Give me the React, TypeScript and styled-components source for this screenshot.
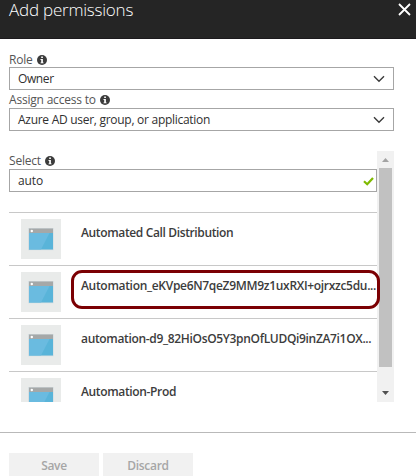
import React from 'react';
import styled, { createGlobalStyle } from 'styled-components';

const GlobalStyle = createGlobalStyle`
  * { box-sizing: border-box; }
  body { margin: 0; background: #fff; overflow: hidden; }
`;

const Blade = styled.div`
  width: 418px;
  height: 476px;
  overflow: hidden;
  display: flex;
  flex-direction: column;
  background: #fff;
  color: #303030;
  font-family: 'Open Sans', 'Noto Sans', sans-serif;
  font-size: 12px;
`;

const Header = styled.header`
  flex: none;
  width: 416px;
  height: 39px;
  padding: 0 5px 0 9px;
  display: flex;
  justify-content: space-between;
  background: #252525;
  border-bottom: 1px solid #1c1a1d;
  color: #fff;
`;

const Title = styled.h1`
  margin: 0;
  font-size: 17px;
  font-weight: 300;
  line-height: 20px;
  letter-spacing: -0.22px;
  white-space: nowrap;
`;

const CloseIcon = styled.svg`
  width: 13px;
  height: 13px;
  margin-top: 3px;
`;

const Body = styled.main`
  flex: none;
  height: 363px;
  padding: 12px 0 0 9px;
  display: flex;
  flex-direction: column;
`;

const Label = styled.div<{ $height: number; $top?: number }>`
  flex: none;
  height: ${(p) => p.$height}px;
  padding-top: ${(p) => p.$top ?? 0}px;
  display: flex;
  align-items: center;
  gap: 4px;
  color: #555;
  line-height: 16px;
  letter-spacing: -0.2px;
  white-space: nowrap;
`;

const Field = styled.div<{ $width: number; $tracking: number }>`
  flex: none;
  width: ${(p) => p.$width}px;
  height: 23px;
  padding: 0 8px;
  border: 1px solid #a6a6a6;
  display: flex;
  align-items: center;
  justify-content: space-between;
  line-height: 20px;
  letter-spacing: ${(p) => p.$tracking}px;
  white-space: nowrap;
`;

const Chevron = styled.svg`
  width: 12px;
  height: 8px;
  margin-top: 1px;
`;

const Check = styled.svg`
  width: 11px;
  height: 9px;
  margin: 1px -6px 0 0;
`;

const ScrollArea = styled.section`
  margin-top: 20px;
  height: 251px;
  display: flex;
`;

const Content = styled.div`
  flex: none;
  width: 368px;
  height: 251px;
`;

const List = styled.ul`
  list-style: none;
  margin: 19px 0 0;
  padding: 1px 4px 0 0;
  width: 372px;
  height: 191px;
  overflow: hidden;
`;

const Item = styled.li`
  position: relative;
  width: 368px;
  height: 53px;
  padding: 6px 0 0 12px;
  border-top: 1px solid #c8c8c8;
  display: flex;
`;

const Thumb = styled.svg`
  flex: none;
  width: 40px;
  height: 40px;
`;

const Name = styled.span<{ $tracking: number }>`
  margin: 5px 0 0 20px;
  font-weight: 600;
  line-height: 18px;
  color: #3c3c3c;
  letter-spacing: ${(p) => p.$tracking}px;
  white-space: nowrap;
`;

const Highlight = styled.div`
  position: absolute;
  left: 62px;
  top: 4px;
  width: 309px;
  height: 39px;
  border: 3px solid #7b0003;
  border-radius: 11px;
  z-index: 1;
`;

const Scrollbar = styled.div`
  width: 17px;
  height: 251px;
  background: #f1f1f1;
  display: flex;
  flex-direction: column;
  align-items: center;
`;

const ArrowBox = styled.svg`
  flex: none;
  width: 17px;
  height: 17px;
`;

const Handle = styled.div`
  width: 13px;
  height: 199px;
  background: #c1c1c1;
  margin-bottom: 18px;
`;

const Footer = styled.footer`
  flex: none;
  width: 416px;
  margin-top: 30px;
  height: 44px;
  padding: 20px 0 0 9px;
  border-top: 1px solid #b9b9b9;
  display: flex;
  gap: 4px;
`;

const Button = styled.button`
  width: 90px;
  height: 26px;
  padding: 0;
  border: 0;
  background: #f1f1f1;
  color: #a6a6a6;
  font: 600 12px/26px 'Open Sans', 'Noto Sans', sans-serif;
  letter-spacing: -0.3px;
`;

const Info = () => (
  <svg width="10" height="10" viewBox="0 0 10 10">
    <circle cx="5" cy="5" r="5" fill="#3c3c3c" />
    <path d="M4.2 1.5h1.7v1.4H4.2zM3.5 4h2.4v3.4h.7v.9H3.5v-.9h.7V4.9h-.7z" fill="#fff" />
  </svg>
);

const Down = () => (
  <Chevron viewBox="0 0 12 8">
    <path d="M1 1.3 6 6.3 11 1.3" fill="none" stroke="#3a3a3a" strokeWidth="1.4" />
  </Chevron>
);

const AppThumb = () => (
  <Thumb viewBox="0 0 40 40">
    <path d="M0 0h40v40H0z" fill="#e9ebea" />
    <path d="M7.2 9h25.4v22.2H7.2z" fill="#d3dcdf" />
    <path d="M8 9.5h24V14H8z" fill="#a5a8a8" />
    <path d="M8 14h24v16.5H8z" fill="#59b4d9" />
    <path d="M8 14h20.5L20 30.5H8z" fill="#6abbe0" />
    <circle cx="10.8" cy="12" r="1.2" fill="#fff" />
  </Thumb>
);

const items = [
  { name: 'Automated Call Distribution', tracking: -0.36 },
  { name: 'Automation_eKVpe6N7qeZ9MM9z1uxRXI+ojrxzc5du...', tracking: -0.31, marked: true },
  { name: 'automation-d9_82HiOsO5Y3pnOfLUDQi9inZA7i1OX...', tracking: -0.33 },
  { name: 'Automation-Prod', tracking: -0.35 },
];

export default function App() {
  return (
    <Blade>
      <GlobalStyle />
      <Header>
        <Title>Add permissions</Title>
        <CloseIcon viewBox="0 0 13 13">
          <path d="M1 1 12 12M12 1 1 12" stroke="#fff" strokeWidth="1.8" />
        </CloseIcon>
      </Header>
      <Body>
        <Label $height={16} $top={1}>Role <Info /></Label>
        <Field $width={385} $tracking={-0.4}>Owner <Down /></Field>
        <Label $height={18} $top={2}>Assign access to <Info /></Label>
        <Field $width={385} $tracking={-0.28}>Azure AD user, group, or application <Down /></Field>
        <ScrollArea>
          <Content>
            <Label $height={18} $top={2}>Select <Info /></Label>
            <Field $width={368} $tracking={-0.1}>
              auto
              <Check viewBox="0 0 11 9">
                <path d="M1 4.3 4.2 7.3 10 .9" fill="none" stroke="#7fba00" strokeWidth="2.2" />
              </Check>
            </Field>
            <List>
              {items.map((item) => (
                <Item key={item.name}>
                  <AppThumb />
                  <Name $tracking={item.tracking}>{item.name}</Name>
                  {item.marked && <Highlight />}
                </Item>
              ))}
            </List>
          </Content>
          <Scrollbar>
            <ArrowBox viewBox="0 0 17 17"><path d="M5 11h7L8.5 7z" fill="#a3a3a3" /></ArrowBox>
            <Handle />
            <ArrowBox viewBox="0 0 17 17"><path d="M5 6h7L8.5 10z" fill="#505050" /></ArrowBox>
          </Scrollbar>
        </ScrollArea>
      </Body>
      <Footer>
        <Button>Save</Button>
        <Button>Discard</Button>
      </Footer>
    </Blade>
  );
}
